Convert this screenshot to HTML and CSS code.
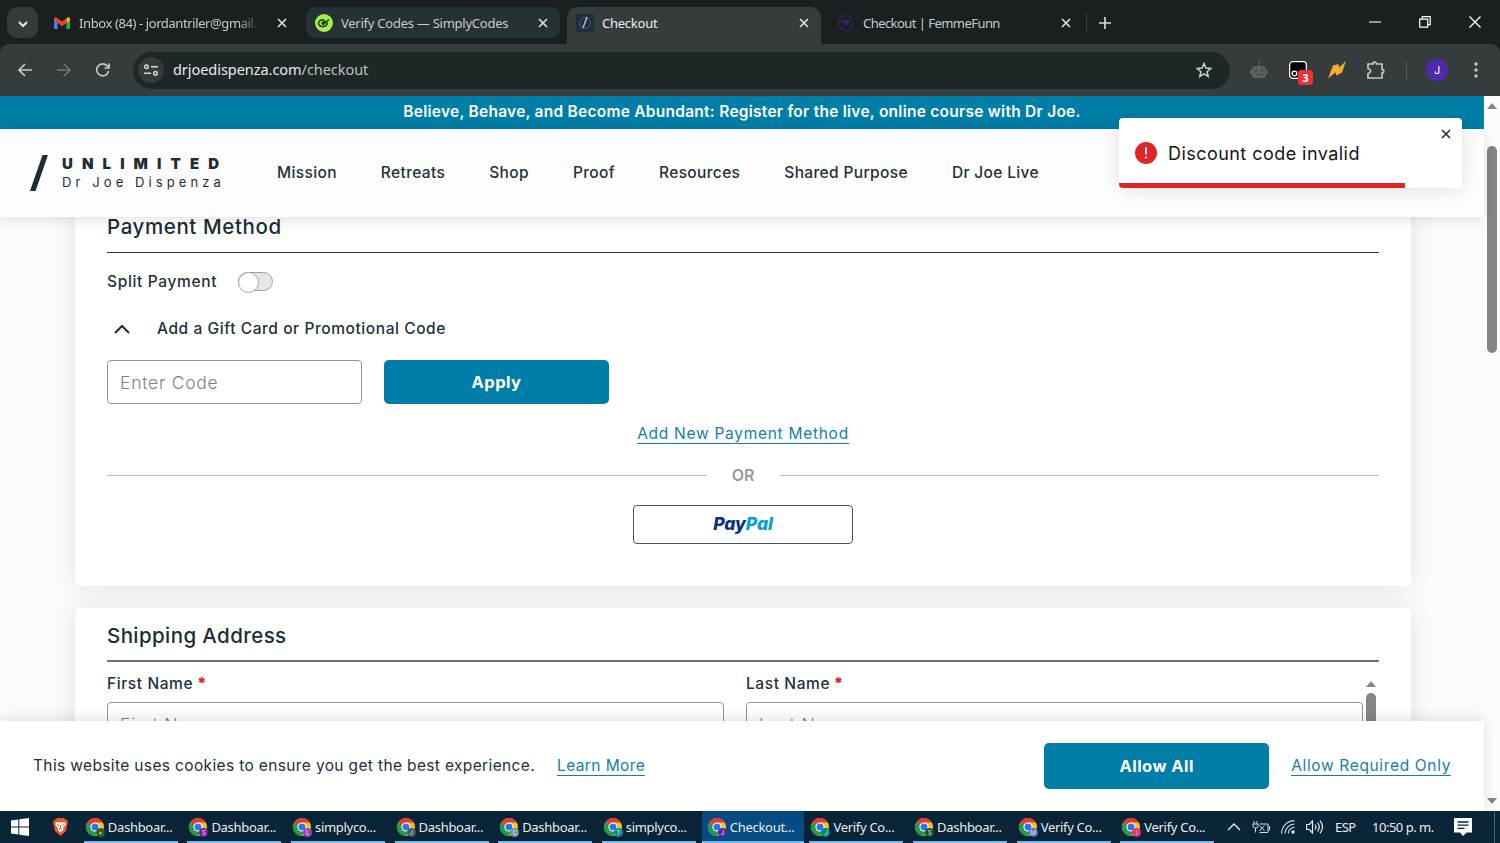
FILE: index.html
```html
<!DOCTYPE html>
<html lang="en">
<head>
  <meta charset="UTF-8" />
  <meta name="viewport" content="width=device-width, initial-scale=1.0"/>
  <title>Checkout</title>
  <link rel="stylesheet" href="styles.css">
</head>

<body>

  <!-- Shared icons -->
  <svg class="defs" width="0" height="0">
    <symbol id="x" viewBox="0 0 10 10"><path d="M1 1l8 8M9 1l-8 8" fill="none" stroke="currentColor" stroke-width="1.7"/></symbol>
    <symbol id="chrome" viewBox="0 0 18 18">
      <circle cx="9" cy="9" r="9" fill="#fbc116"/>
      <path d="M9 9L1.2 4.5A9 9 0 0 0 9 18l4-6.8z" fill="#1f9d4d"/>
      <path d="M9 9L1.2 4.5A9 9 0 0 1 16.8 4.6H9z" fill="#e33b2e"/>
      <circle cx="9" cy="9" r="4.6" fill="#fff"/>
      <circle cx="9" cy="9" r="3.5" fill="#2f73e8"/>
    </symbol>
  </svg>

  <!-- Browser tabs -->
  <div class="tabs">
    <button class="tab-search"><svg width="10" height="7" viewBox="0 0 10 7"><path d="M1 1l4 4 4-4" fill="none" stroke="#e6e9e9" stroke-width="2"/></svg></button>
    <div class="tab first">
      <svg width="16" height="12" viewBox="0 0 16 12">
        <path d="M0 1.5V11a1 1 0 0 0 1 1h2.6V5z" fill="#4285f4"/>
        <path d="M16 1.5V11a1 1 0 0 1-1 1h-2.6V5z" fill="#34a853"/>
        <path d="M12.4 1.2L14 .2q2-.4 2 1.7v1.5l-3.6 2.7z" fill="#fbbc04"/>
        <path d="M0 3.4V1.9Q0-.2 2 .2l6 4.400 4.400-3.400v4.900L8 9.300 3.600 6.100z" fill="#ea4335"/>
      </svg>
      <span class="tab-title fade">Inbox (84) - jordantriler@gmail.</span>
      <svg class="close"><use href="#x"/></svg>
    </div>
    <div class="tab grouped">
      <svg width="18" height="18" viewBox="0 0 18 18"><circle cx="9" cy="9" r="9" fill="#a4f04b"/><path d="M9.500 6H7a3.200 3.200 0 0 0-.5 6.400H9c2.300 0 3-1.500 3.500-4M6.500 9.500l2 .8L14 5.500M6.500 9.500q2-2 4-2" fill="none" stroke="#1c3418" stroke-width="1.500"/></svg>
      <span class="tab-title codes">Verify Codes — SimplyCodes</span>
      <svg class="close"><use href="#x"/></svg>
    </div>
    <div class="tab active">
      <svg width="18" height="18" viewBox="0 0 18 18"><path fill="#1f2d3c" d="M0 0h18v18H0z"/><circle cx="9" cy="9" r="5.5" fill="none" stroke="#4a5a68"/><path d="M7 14l4-11" stroke="#b8c2c8" stroke-width="1.4"/></svg>
      <span class="tab-title">Checkout</span>
      <svg class="close"><use href="#x"/></svg>
    </div>
    <div class="tab last">
      <svg width="16" height="16" viewBox="0 0 16 16"><circle cx="8" cy="8" r="7.3" fill="none" stroke="#39206b" stroke-width="1.3"/><path d="M3 5h10l-2 3H10l-2 4-2-4H5z" fill="#39206b"/></svg>
      <span class="tab-title">Checkout | FemmeFunn</span>
      <svg class="close"><use href="#x"/></svg>
    </div>
    <span class="tab-divider"></span>
    <svg class="plus" width="12" height="12" viewBox="0 0 12 12"><path d="M6 0v12M0 6h12" stroke="#d5dada" stroke-width="1.7"/></svg>
    <div class="window-buttons">
      <svg width="12" height="12" viewBox="0 0 12 12"><path d="M0 6h12" stroke="#e4e8e8" stroke-width="1.2"/></svg>
      <svg width="12" height="12" viewBox="0 0 12 12"><path d="M.7 3.2h8v8h-8zM3.2 3V.7h8v8H9" fill="none" stroke="#fff" stroke-width="1.2"/></svg>
      <svg width="12" height="12" viewBox="0 0 12 12"><path d="M.5.5l11 11M11.5.5l-11 11" stroke="#fff" stroke-width="1.3"/></svg>
    </div>
  </div>

  <!-- Address bar -->
  <div class="toolbar">
    <div class="nav-icons">
      <svg width="14" height="14" viewBox="0 0 14 14"><path d="M14 7H1.5M7 1L1 7l6 6" fill="none" stroke="#c3c9c9" stroke-width="1.7"/></svg>
      <svg width="14" height="14" viewBox="0 0 14 14"><path d="M0 7h12.5M7 1l6 6-6 6" fill="none" stroke="#6e7575" stroke-width="1.7"/></svg>
      <svg width="14" height="14" viewBox="0 0 14 14"><path d="M12.6 8A6 6 0 1 1 11.3 3L13 5M13 .5V5H8.5" fill="none" stroke="#c3c9c9" stroke-width="1.7"/></svg>
    </div>
    <div class="omnibox">
      <span class="site-info"><svg width="14" height="12" viewBox="0 0 14 12" fill="none" stroke="#d5dada" stroke-width="1.5"><circle cx="2.5" cy="2.7" r="1.8"/><path d="M7 2.7h7M0 9.3h7"/><circle cx="11.5" cy="9.3" r="1.8"/></svg></span>
      <span class="url">drjoedispenza.com<em>/checkout</em></span>
      <svg width="16" height="16" viewBox="0 0 16 16"><path d="M8 1.5l1.9 4.6 4.9.4-3.7 3.2 1.1 4.8L8 11.9l-4.2 2.6 1.1-4.8L1.2 6.5l4.9-.4z" fill="none" stroke="#c8cece" stroke-width="1.5"/></svg>
    </div>
    <div class="extensions">
      <svg width="18" height="18" viewBox="0 0 18 18"><path d="M8.4 0h1.2v5h3q3 0 3 3v1H18v4h-2v2q0 2-2 2H4q-2 0-2-2v-2H0V9h2V8q0-3 3-3h3.4z" fill="#5c5f61"/><circle cx="6" cy="9.5" r="1" fill="#3b4041"/><circle cx="12" cy="9.5" r="1" fill="#3b4041"/><path d="M6 13.5h6" stroke="#3b4041"/></svg>
      <div class="ext-badge">
        <svg width="18" height="18" viewBox="0 0 18 18"><rect x=".7" y=".7" width="16.6" height="16.6" rx="3" fill="#000" stroke="#fff" stroke-width="1.2"/><circle cx="5.5" cy="12.5" r="2.3" fill="none" stroke="#fff" stroke-width="1.3"/></svg>
        <b>3</b>
      </div>
      <svg width="18" height="18" viewBox="0 0 18 18"><path d="M18 0l-7 6.500L10.500 3 5 4.500 0 17.500l7.500-6L8.500 14.500l5.500-3z" fill="#f7a931"/></svg>
      <svg width="19" height="18" viewBox="0 0 19 18"><path d="M2 3h5a1.800 1.800 0 0 1 3.600 0H16v5.500a1.800 1.800 0 0 1 0 3.600V17H2v-4.500a2.500 2.500 0 0 0 0-5z" fill="none" stroke="#c3c9c9" stroke-width="1.700"/></svg>
      <span class="bar"></span>
      <span class="avatar">J</span>
      <svg width="4" height="16" viewBox="0 0 4 16" fill="#c3c9c9"><circle cx="2" cy="2" r="1.7"/><circle cx="2" cy="8" r="1.7"/><circle cx="2" cy="14" r="1.7"/></svg>
    </div>
  </div>

  <div class="viewport">
    <div class="page">
      <div class="banner"><span>Believe, Behave, and Become Abundant: Register for the live, online course with Dr Joe.</span></div>

      <header>
        <a class="logo">
          <svg width="18" height="36" viewBox="0 0 18 36"><path d="M12.5 0H18L5.5 36H0z" fill="#1d2d35"/></svg>
          <span class="logo-text"><strong>UNLIMITED</strong><small>Dr Joe Dispenza</small></span>
        </a>
        <nav>
          <a>Mission</a>
          <a>Retreats</a>
          <a>Shop</a>
          <a>Proof</a>
          <a>Resources</a>
          <a>Shared Purpose</a>
          <a>Dr Joe Live</a>
        </nav>
      </header>

      <main>
        <section class="card payment">
          <h2>Payment Method</h2>
          <div class="split"><span>Split Payment</span><i class="toggle"></i></div>
          <div class="promo-title">
            <svg width="16" height="10" viewBox="0 0 16 10"><path d="M1 9l7-7 7 7" fill="none" stroke="#1d2d35" stroke-width="2"/></svg>
            <span>Add a Gift Card or Promotional Code</span>
          </div>
          <div class="promo-form">
            <input type="text" placeholder="Enter Code">
            <button class="btn">Apply</button>
          </div>
          <div class="center"><a class="link add-method">Add New Payment Method</a></div>
          <div class="or"><span>OR</span></div>
          <div class="center"><button class="paypal">Pay<span>Pal</span></button></div>
        </section>

        <section class="card shipping">
          <h2>Shipping Address</h2>
          <div class="fields">
            <label>First Name <b>*</b><input type="text" placeholder="First Name"></label>
            <label>Last Name <b>*</b><input type="text" placeholder="Last Name"></label>
            <div class="inner-scroll"><i class="arrow-up"></i><i class="thumb"></i></div>
          </div>
        </section>
      </main>

      <div class="cookies">
        <p>This website uses cookies to ensure you get the best experience.</p>
        <a class="link learn">Learn More</a>
        <button class="btn">Allow All</button>
        <a class="link required">Allow Required Only</a>
      </div>
    </div>

    <div class="scrollbar"><i class="arrow-up"></i><i class="thumb"></i><i class="arrow-down"></i></div>

    <div class="toast">
      <svg width="22" height="22" viewBox="0 0 22 22"><circle cx="11" cy="11" r="11" fill="#dd2727"/><path d="M10 5.5h2l-.3 7h-1.4z" fill="#fff"/><circle cx="11" cy="15.5" r="1.1" fill="#fff"/></svg>
      <span>Discount code invalid</span>
      <svg class="toast-close"><use href="#x"/></svg>
      <div class="progress"></div>
    </div>
  </div>

  <!-- Taskbar -->
  <footer class="taskbar">
    <svg class="start" width="18" height="18" viewBox="0 0 18 18" fill="#fff"><path d="M0 2.6L7.3 1.5v7H0zM8.3 1.3L18 0v8.5H8.3zM0 9.5h7.3v7L0 15.4zM8.3 9.5H18V18l-9.7-1.3z"/></svg>
    <svg class="brave" width="15" height="18" viewBox="0 0 15 18"><path d="M4 0h7l1.3 1.5L14 1.7l1 3-.7 2L13 13l-5.5 5L2 13 .7 6.7 0 4.7l1-3 1.7-.2z" fill="#f1562b"/><path d="M3 4l2.5.5L7.500 4l2 .5L12 4l.8 2.500L10 10l.5 1.700-3 2.800-3-2.800L5 10 2.200 6.500z" fill="#fff"/><path d="M4 6.700l2 .8M11 6.700l-2 .8M7.500 7v3l-1.300 1h2.600" stroke="#f1562b" fill="none"/></svg>
    <div class="tasks" id="tasks"></div>
    <div class="tray">
      <svg width="14" height="8" viewBox="0 0 14 8"><path d="M1 7l6-6 6 6" fill="none" stroke="#e6ebee" stroke-width="1.4"/></svg>
      <svg width="18" height="13" viewBox="0 0 18 13" fill="none" stroke="#d3dade"><path d="M2 0v3M5 0v3M1 3h5v2q0 2-2.500 2T1 5zM3.500 7v4.500M7.500 3H16v8.500H7.500M16.500 5.500h1v3.500h-1M7.500 4.500l5 5.500M12.500 4.500l-5 5.500"/></svg>
      <svg width="14" height="14" viewBox="0 0 14 14" fill="none" stroke="#d3dade" stroke-width="1.1"><path d="M.6 13.5A13 13 0 0 1 13.5.6M4 13.5a9.5 9.5 0 0 1 9.5-9.5M7.3 13.5a6.2 6.2 0 0 1 6.2-6.2"/><circle cx="12" cy="12" r="1.2" fill="#fff"/></svg>
      <svg width="18" height="14" viewBox="0 0 18 14" fill="none" stroke="#e6ebee" stroke-width="1.2"><path d="M.6 4.5h2.7L6.5 1v12L3.3 9.500H.6zM9 4.500q2 2.500 0 5M11.500 2.500q3.500 4.500 0 9M14 .7q5 6.300 0 12.600"/></svg>
      <span class="lang">ESP</span>
      <span class="clock">10:50 p. m.</span>
      <svg class="notes" width="18" height="18" viewBox="0 0 18 18"><path d="M0 0h18v14.5h-5.5L9 18l-3-3.5H0z" fill="#fff"/><path d="M3.5 4h11M3.5 7.2h11M3.5 10.4h7" stroke="#0a2536" stroke-width="1.3"/></svg>
      <span class="peek"></span>
    </div>
  </footer>

  <script>
    // title, profile letter, profile colour
    const windows = [
      ['Dashboar...', '•', '#2c651f'],
      ['Dashboar...', 'S', '#7b1fa2'],
      ['simplyco...', 'L', '#a43fb8'],
      ['Dashboar...', 'J', '#455a64'],
      ['Dashboar...', 'C', '#78909c'],
      ['simplyco...', 'T', '#0b8c9b'],
      ['Checkout...', 'J', '#5029ae'],
      ['Verify Co...', 'J', '#00897b'],
      ['Dashboar...', 'S', '#17532b'],
      ['Verify Co...', 'M', '#5c6bc0'],
      ['Verify Co...', 'I', '#ec2b7c']
    ];
    const tasks = document.getElementById('tasks');

    windows.forEach(([title, letter, color]) => {
      const item = document.createElement('div');
      item.className = title.startsWith('Checkout') ? 'task current' : 'task';
      item.innerHTML = `
        <span class="task-icon">
          <svg width="18" height="18"><use href="#chrome"/></svg>
          <i style="background:${color}">${letter}</i>
        </span>
        <span>${title}</span>
      `;
      tasks.appendChild(item);
    });
  </script>

</body>
</html>
```
FILE: styles.css
```css
* {
  box-sizing: border-box;
}

body {
  margin: 0;
  height: 843px;
  overflow: hidden;
  display: flex;
  flex-direction: column;
  font-family: Inter, "Liberation Sans", sans-serif;
  color: #22303a;
  background: #1a2022;
}

svg {
  flex: none;
}

.defs {
  position: absolute;
}

button {
  border: none;
  font-family: inherit;
  padding: 0;
}

/* Tabs */
.tabs {
  height: 44px;
  flex: none;
  display: flex;
  align-items: flex-start;
  padding: 7px 19px 0 7px;
  font-family: "Noto Sans", sans-serif;
  font-size: 13px;
  color: #c6cccc;
}

.tab-search {
  width: 31px;
  height: 31px;
  border-radius: 10px;
  background: #353b3d;
}

.tab {
  height: 31px;
  display: flex;
  align-items: center;
  gap: 9px;
  padding: 0 12px 0 9px;
  width: 254px;
  border-radius: 9px;
}

.tab.first {
  margin-left: 7px;
}

.tab.grouped {
  background: #273032;
  margin-left: 7px;
  gap: 8px;
}

.tab.active {
  height: 37px;
  margin-left: 7px;
  padding-bottom: 6px;
  gap: 8px;
  background: #363c3e;
  color: #eceff0;
  border-radius: 10px 10px 0 0;
}

.tab.last {
  margin-left: 8px;
}

.tab-title {
  flex: 1;
  white-space: nowrap;
  letter-spacing: -0.25px;
}

.tab.last .tab-title {
  letter-spacing: -0.55px;
}

.fade {
  letter-spacing: -0.4px;
  -webkit-mask-image: linear-gradient(to right, #000 84%, transparent 96%);
}

.close {
  width: 10px;
  height: 10px;
  color: #dce0e0;
}

.tab-divider {
  width: 1px;
  height: 17px;
  margin: 7px 12px 0 3px;
  background: #3c4445;
}

.plus {
  margin-top: 10px;
}

.window-buttons {
  margin-left: auto;
  margin-top: 9px;
  display: flex;
  gap: 38px;
}

/* Toolbar */
.toolbar {
  height: 52px;
  flex: none;
  display: flex;
  align-items: center;
  padding: 0 22px 0 18px;
  background: #363c3e;
  border-radius: 9px 9px 0 0;
}

.nav-icons {
  display: flex;
  gap: 25px;
  width: 115px;
}

.omnibox {
  width: 1097px;
  height: 37px;
  display: flex;
  align-items: center;
  padding: 0 18px 0 5px;
  border-radius: 19px;
  background: #1f2628;
}

.site-info {
  width: 26px;
  height: 26px;
  border-radius: 50%;
  display: flex;
  align-items: center;
  justify-content: center;
  background: #353b3d;
}

.url {
  flex: 1;
  margin-left: 9px;
  padding-bottom: 2px;
  font: 14.5px "Noto Sans", sans-serif;
  letter-spacing: -0.05px;
  color: #e9ecec;
}

.url em {
  font-style: normal;
  color: #bcc2c2;
}

.extensions {
  flex: 1;
  display: flex;
  align-items: center;
  justify-content: space-between;
  margin-left: 20px;
}

.ext-badge {
  position: relative;
  height: 18px;
}

.ext-badge b {
  position: absolute;
  left: 9px;
  top: 9px;
  width: 15px;
  height: 15px;
  border-radius: 3px;
  background: #e8323a;
  color: #fff;
  font: bold 11px/15px "Noto Sans", sans-serif;
  text-align: center;
}

.bar {
  width: 1px;
  height: 17px;
  background: #575e5f;
}

.avatar {
  width: 22px;
  height: 22px;
  margin: 0 5px 0 -2px;
  border-radius: 50%;
  background: #5029ae;
  color: #fff;
  font-size: 11px;
  line-height: 22px;
  text-align: center;
}

/* Page */
.viewport {
  position: relative;
  height: 715px;
  flex: none;
  display: flex;
}

.page {
  width: 1484px;
  display: flex;
  flex-direction: column;
  background: #fbfbfb;
}

.banner {
  height: 33px;
  flex: none;
  background: #007ea8;
  color: #fff;
  font-size: 15.5px;
  font-weight: 600;
  line-height: 31px;
  letter-spacing: 0.26px;
  text-align: center;
}

header {
  height: 88px;
  flex: none;
  position: relative;
  z-index: 1;
  display: flex;
  align-items: center;
  padding-left: 30px;
  background: #fdfdfd;
  box-shadow: 0 2px 14px rgba(0, 0, 0, 0.12);
}

.logo {
  display: flex;
  align-items: center;
  gap: 14px;
  width: 247px;
}

.logo-text {
  display: flex;
  flex-direction: column;
  color: #1d2d35;
}

.logo-text strong {
  font-size: 15px;
  font-weight: 900;
  line-height: 18px;
  letter-spacing: 9.1px;
}

.logo-text small {
  font-size: 13px;
  line-height: 18px;
  letter-spacing: 4.1px;
}

nav {
  display: flex;
  gap: 44px;
  padding-bottom: 1px;
  font-size: 15.5px;
  font-weight: 450;
  letter-spacing: 0.36px;
}

main {
  flex: 1;
  overflow: hidden;
}

.card {
  width: 1336px;
  margin-left: 75px;
  padding: 5px 32px 0;
  background: #fff;
  border-radius: 5px;
  box-shadow: 0 0 26px rgba(0, 0, 0, 0.1);
}

.card h2 {
  margin: 0;
  font-size: 20.5px;
  font-weight: 500;
  line-height: 46px;
  letter-spacing: 0.6px;
  color: #1d2d35;
}

.payment {
  margin-top: -18px;
  height: 387px;
}

.payment h2 {
  padding-bottom: 2px;
  border-bottom: 1px solid #22303a;
}

.split {
  display: flex;
  align-items: center;
  gap: 21px;
  height: 57px;
  font-size: 15.5px;
  font-weight: 550;
  letter-spacing: 0.65px;
}

.toggle {
  width: 35px;
  height: 19px;
  border: 1px solid #a2a2a2;
  border-radius: 10px;
  background: #e6e6e6;
}

.toggle::before {
  content: "";
  display: block;
  width: 19px;
  height: 19px;
  margin: -1px;
  border: 1px solid #a2a2a2;
  border-radius: 50%;
  background: #fff;
}

.promo-title {
  display: flex;
  align-items: center;
  gap: 27px;
  height: 37px;
  padding-left: 7px;
  font-size: 15.5px;
  font-weight: 550;
  letter-spacing: 0.58px;
}

.promo-form {
  display: flex;
  gap: 22px;
  margin-top: 13px;
}

input {
  height: 44px;
  border: 1px solid #949494;
  border-radius: 4px;
  padding: 0 12px;
  font-family: inherit;
  font-size: 17.5px;
  letter-spacing: 0.75px;
  background: #fff;
}

input::placeholder {
  color: #808080;
  font-weight: 300;
}

.promo-form input {
  width: 255px;
}

.btn {
  width: 225px;
  height: 44px;
  border-radius: 5px;
  background: #007ea8;
  color: #fff;
  font-size: 16.5px;
  font-weight: 700;
  letter-spacing: 0.45px;
}

.center {
  display: flex;
  justify-content: center;
}

.link {
  color: #137fa5;
  font-size: 15.5px;
  line-height: 18px;
  letter-spacing: 0.72px;
  border-bottom: 1px solid #137fa5;
}

.add-method {
  margin-top: 21px;
}

.or {
  display: flex;
  align-items: center;
  gap: 26px;
  height: 20px;
  margin: 21px 0 20px;
  color: #999;
  font-size: 16px;
  font-weight: 600;
}

.or::before,
.or::after {
  content: "";
  flex: 1;
  height: 1px;
  background: #b9b9b9;
}

.paypal {
  width: 220px;
  height: 39px;
  padding-bottom: 2px;
  border: 1px solid #505050;
  border-radius: 4px;
  background: #fff;
  color: #08327f;
  font: italic 800 17.5px Inter, sans-serif;
  letter-spacing: -0.1px;
}

.paypal span {
  color: #0d9bdc;
}

.shipping {
  margin-top: 22px;
  height: 300px;
}

.shipping h2 {
  letter-spacing: 0.4px;
  padding-bottom: 1px;
  border-bottom: 2px solid #68747c;
}

.fields {
  display: flex;
  gap: 22px;
  padding-top: 13px;
}

.fields label {
  flex: 1;
  font-size: 15.5px;
  font-weight: 550;
  line-height: 18px;
  letter-spacing: 0.6px;
}

.fields b {
  color: #dd2727;
  margin-left: -1px;
}

.fields input {
  display: block;
  width: 100%;
  margin-top: 9px;
}

.inner-scroll {
  width: 13px;
  margin-left: -21px;
  margin-right: 2px;
  padding-top: 6px;
}

.arrow-up,
.arrow-down {
  display: block;
  width: 0;
  margin: 0 auto;
  border: 5px solid transparent;
  border-top-width: 0;
  border-bottom: 6px solid #858585;
}

.arrow-down {
  border-bottom-width: 0;
  border-top: 6px solid #858585;
}

.thumb {
  display: block;
  width: 10px;
  border-radius: 5px;
  background: #858585;
}

.inner-scroll .thumb {
  height: 60px;
  margin: 6px auto 0;
}

.cookies {
  height: 90px;
  flex: none;
  position: relative;
  display: flex;
  align-items: center;
  padding: 0 33px;
  background: #fff;
  box-shadow: 0 -2px 14px rgba(0, 0, 0, 0.12);
}

.cookies p {
  margin: 0 22px 1px 0;
  font-size: 15.5px;
  letter-spacing: 0.36px;
}

.cookies .learn {
  letter-spacing: 0.4px;
}

.cookies .required {
  letter-spacing: 0.65px;
}

.cookies .btn {
  height: 46px;
  margin: 0 22px 0 auto;
}

.scrollbar {
  width: 16px;
  padding: 7px 0;
  display: flex;
  flex-direction: column;
  background: #fcfcfc;
}

.scrollbar .thumb {
  height: 207px;
  margin: 37px auto auto 3px;
}

.scrollbar .arrow-up,
.scrollbar .arrow-down {
  margin: 0 3px;
}

/* Notification */
.toast {
  position: absolute;
  z-index: 2;
  left: 1119px;
  top: 22px;
  width: 343px;
  height: 70px;
  display: flex;
  align-items: center;
  gap: 11px;
  padding-left: 16px;
  overflow: hidden;
  border-radius: 4px;
  background: #fff;
  color: #151515;
  font-size: 18px;
  letter-spacing: 0.45px;
  box-shadow: 0 2px 20px rgba(0, 0, 0, 0.12);
}

.toast-close {
  position: absolute;
  right: 11px;
  top: 11px;
  width: 10px;
  height: 10px;
  color: #333;
}

.progress {
  position: absolute;
  left: 0;
  bottom: 0;
  width: 286px;
  height: 5px;
  background: #dd2727;
}

/* Taskbar */
.taskbar {
  height: 32px;
  flex: none;
  display: flex;
  align-items: center;
  background: #0a2538;
  color: #e8edf0;
  font-family: "Noto Sans", sans-serif;
  font-size: 13px;
}

.start {
  margin-left: 11px;
}

.brave {
  margin: 0 11px 0 24px;
}

.tasks {
  display: flex;
  height: 32px;
}

.task {
  width: 94px;
  margin: 0 4.8px;
  padding: 1px 0 0 2px;
  display: flex;
  align-items: center;
  gap: 4px;
  white-space: nowrap;
  letter-spacing: -0.3px;
  border-bottom: 2px solid #76b9ed;
}

.task.current {
  width: 102px;
  margin: 0 0.8px 0 1.3px;
  padding-left: 6px;
  background: #064b83;
}

.task-icon {
  position: relative;
  height: 18px;
}

.task-icon i {
  position: absolute;
  right: -1px;
  bottom: -1px;
  width: 9px;
  height: 9px;
  border-radius: 50%;
  font: 6px/9px Inter, sans-serif;
  text-align: center;
}

.tray {
  flex: 1;
  display: flex;
  align-items: center;
  height: 32px;
  padding-left: 8px;
}

.tray svg {
  margin-right: 11px;
}

.lang {
  width: 37px;
  letter-spacing: -0.6px;
}

.clock {
  width: 82px;
  letter-spacing: -0.5px;
}

.tray .notes {
  margin-right: 22px;
}

.peek {
  width: 1px;
  height: 32px;
  background: #4d6270;
}
```
